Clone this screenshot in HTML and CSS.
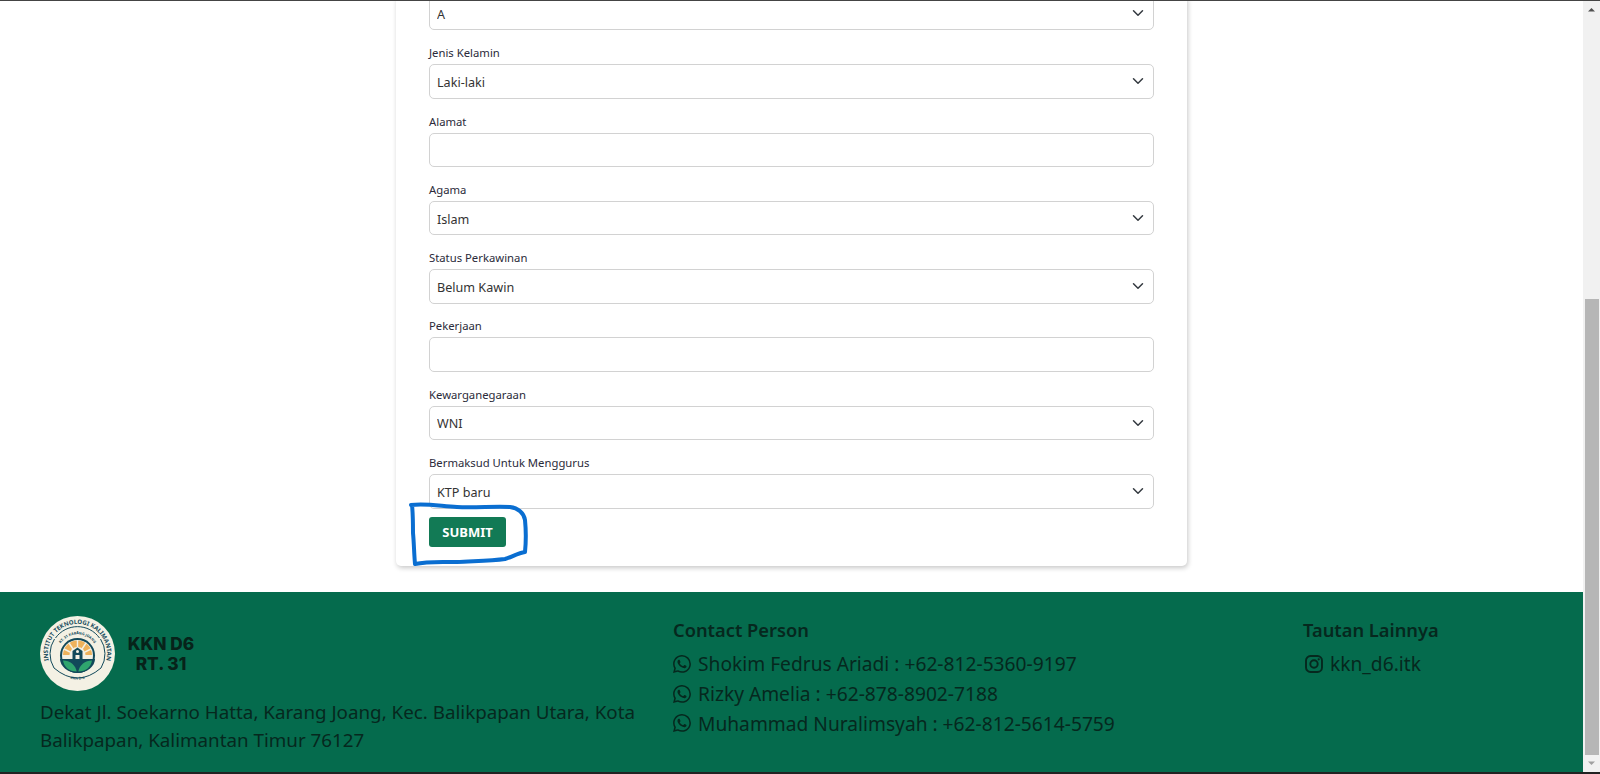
FILE: index.html
```html
<!doctype html>
<html>
<head>
<meta charset="UTF-8">
<title>KKN D6 RT. 31</title>
<link rel="stylesheet" href="styles.css">
</head>

<body>
<svg class="defs" width="0" height="0">
	<symbol id="chev" viewBox="0 0 16 16"><path d="M2 5l6 6 6-6" fill="none" stroke="#343a40" stroke-width="2" stroke-linecap="round" stroke-linejoin="round"/></symbol>
	<symbol id="wa" viewBox="0 0 16 16"><path fill="currentColor" d="M13.601 2.326A7.854 7.854 0 0 0 7.994 0C3.627 0 .068 3.558.064 7.926c0 1.399.366 2.76 1.057 3.965L0 16l4.204-1.102a7.933 7.933 0 0 0 3.79.965h.004c4.368 0 7.926-3.558 7.93-7.93A7.898 7.898 0 0 0 13.6 2.326zM7.994 14.521a6.573 6.573 0 0 1-3.356-.92l-.24-.144-2.494.654.666-2.433-.156-.251a6.56 6.56 0 0 1-1.007-3.505c0-3.626 2.957-6.584 6.591-6.584a6.56 6.56 0 0 1 4.66 1.931 6.557 6.557 0 0 1 1.928 4.66c-.004 3.639-2.961 6.592-6.592 6.592zm3.615-4.934c-.197-.099-1.17-.578-1.353-.646-.182-.065-.315-.099-.445.099-.133.197-.513.646-.627.775-.114.133-.232.148-.43.05-.197-.1-.836-.308-1.592-.985-.59-.525-.985-1.175-1.103-1.372-.114-.198-.011-.304.088-.403.087-.088.197-.232.296-.346.1-.114.133-.198.198-.33.065-.134.034-.248-.015-.347-.05-.099-.445-1.076-.612-1.47-.16-.389-.323-.335-.445-.34-.114-.007-.247-.007-.38-.007a.729.729 0 0 0-.529.247c-.182.198-.691.677-.691 1.654 0 .977.71 1.916.81 2.049.098.133 1.394 2.132 3.383 2.992.47.205.84.326 1.129.418.475.152.904.129 1.246.08.38-.058 1.171-.48 1.338-.943.164-.464.164-.86.114-.943-.049-.084-.182-.133-.38-.232z"/></symbol>
</svg>

<div class="window">
	<div class="page">
		<main class="content">
			<form class="card">
				<div class="field">
					<div class="select"><select><option>A</option></select><svg class="chev"><use href="#chev"/></svg></div>
				</div>
				<div class="field">
					<label>Jenis Kelamin</label>
					<div class="select"><select><option>Laki-laki</option></select><svg class="chev"><use href="#chev"/></svg></div>
				</div>
				<div class="field">
					<label>Alamat</label>
					<input type="text">
				</div>
				<div class="field">
					<label>Agama</label>
					<div class="select"><select><option>Islam</option></select><svg class="chev"><use href="#chev"/></svg></div>
				</div>
				<div class="field">
					<label>Status Perkawinan</label>
					<div class="select"><select><option>Belum Kawin</option></select><svg class="chev"><use href="#chev"/></svg></div>
				</div>
				<div class="field">
					<label>Pekerjaan</label>
					<input type="text">
				</div>
				<div class="field">
					<label>Kewarganegaraan</label>
					<div class="select"><select><option>WNI</option></select><svg class="chev"><use href="#chev"/></svg></div>
				</div>
				<div class="field last">
					<label>Bermaksud Untuk Menggurus</label>
					<div class="select"><select><option>KTP baru</option></select><svg class="chev"><use href="#chev"/></svg></div>
				</div>
				<button class="submit" type="button">SUBMIT</button>
			</form>
		</main>

		<footer class="footer">
			<div class="col-about">
				<div class="brand">
					<svg class="logo" viewBox="0 0 75 75">
						<defs>
							<path id="arc-out" d="M12 52.500A29.600 29.600 0 1 1 63 52.500"/>
							<path id="arc-in" d="M18 34A20 20 0 0 1 57 34"/>
							<path id="arc-low" d="M28 62Q37.500 65 47 62"/>
						</defs>
						<circle cx="37.500" cy="37.500" r="37.500" fill="#f4f1e4"/>
						<path d="M14 52A27 27 0 0 1 14.500 23M61 52A27 27 0 0 0 60.500 23M14 52Q37.500 72 61 52" fill="none" stroke="#12495a" stroke-width="1"/>
						<path d="M15.500 22A27 27 0 0 1 59.500 22" fill="none" stroke="#12495a" stroke-width="1"/>
						<text class="logo-text"><textPath href="#arc-out" startOffset="50%" text-anchor="middle">INSTITUT TEKNOLOGI KALIMANTAN</textPath></text>
						<text class="logo-small"><textPath href="#arc-in" startOffset="50%" text-anchor="middle">RT. 31 KARANG JOANG</textPath></text>
						<circle cx="37.500" cy="39.500" r="17.500" fill="#12495a"/>
						<circle cx="37.500" cy="39.500" r="15.500" fill="#f4f1e4"/>
						<path d="M23 39A14.500 14.500 0 0 1 52 39L45.500 39A8 8 0 0 0 29.500 39Z" fill="#eeb25c"/>
						<path d="M29 27L33 33M37.500 24V31M46 27L42 33M24 33L30 36M51 33L45 36" stroke="#f4f1e4" stroke-width="1.400"/>
						<path d="M32.500 44V35L37.500 31.500L42.500 35V44Z" fill="#12495a"/>
						<circle cx="37.500" cy="35.500" r="1.500" fill="#f4f1e4"/>
						<path d="M35.500 44H39.500V39H35.500Z" fill="#f4f1e4"/>
						<path d="M20 43H55C55 50 47 57 37.500 57S20 50 20 43Z" fill="#12495a"/>
						<path d="M36.700 55.500C35.500 49 30 44.500 23 44.500C24 51 29 55.500 36.700 55.500Z" fill="#2fa56e"/>
						<path d="M38.300 55.500C39.500 49 45 44.500 52 44.500C51 51 46 55.500 38.300 55.500Z" fill="#2fa56e"/>
						<text class="logo-small"><textPath href="#arc-low" startOffset="50%" text-anchor="middle">KKN D-6</textPath></text>
					</svg>
					<div class="brand-name">KKN D6<br>RT. 31</div>
				</div>
				<p class="address">Dekat Jl. Soekarno Hatta, Karang Joang, Kec. Balikpapan Utara, Kota Balikpapan, Kalimantan Timur 76127</p>
			</div>
			<div class="col-contact">
				<h5>Contact Person</h5>
				<div class="row"><svg class="ico"><use href="#wa"/></svg>Shokim Fedrus Ariadi : +62-812-5360-9197</div>
				<div class="row"><svg class="ico"><use href="#wa"/></svg>Rizky Amelia : +62-878-8902-7188</div>
				<div class="row"><svg class="ico"><use href="#wa"/></svg>Muhammad Nuralimsyah : +62-812-5614-5759</div>
			</div>
			<div class="col-links">
				<h5>Tautan Lainnya</h5>
				<div class="row">
					<svg class="ico insta" viewBox="0 0 16 16"><rect x="0.900" y="0.900" width="14.200" height="14.200" rx="4" fill="none" stroke="currentColor" stroke-width="1.700"/><circle cx="8" cy="8" r="3.300" fill="none" stroke="currentColor" stroke-width="1.700"/><circle cx="12.200" cy="3.800" r="1" fill="currentColor"/></svg>kkn_d6.itk
				</div>
			</div>
		</footer>
	</div>

	<div class="scrollbar">
		<svg class="arrow" viewBox="0 0 17 17"><path d="M5 10.500L8.500 7L12 10.500Z" fill="#505050"/></svg>
		<div class="track"><div class="thumb"></div></div>
		<svg class="arrow" viewBox="0 0 17 17"><path d="M5 6.500L8.500 10L12 6.500Z" fill="#a0a0a0"/></svg>
	</div>
</div>

<!-- hand drawn marker round the button -->
<svg class="marker" viewBox="0 0 1600 774">
	<path d="M411 505C425 503 440 506 457 507C475 508 495 506 510 507C518 508 524 513 525 520C526 530 526 542 525 552C518 553 512 557 505 559C490 561 472 561 457 562C442 562 428 561 415 564C414 553 414 543 413 533C413 523 413 514 412 505" fill="none" stroke="#0a6ed1" stroke-width="4" stroke-linecap="round" stroke-linejoin="round"/>
</svg>
</body>
</html>
```

FILE: styles.css
```css
*{ margin:0; padding:0; box-sizing:border-box; }
body{ width:1600px; height:774px; position:relative; display:flex; flex-direction:column; overflow:hidden; background:#fff; border-top:1px solid #444; border-bottom:2px solid #222; font-family:"Noto Sans","Open Sans",sans-serif; color:#212529; }
.defs{ position:absolute; }
.window{ flex:1; min-height:0; display:flex; }
.page{ flex:1; min-width:0; display:flex; flex-direction:column; justify-content:flex-end; overflow:hidden; }

.content{ flex:none; display:flex; justify-content:center; padding-bottom:26px; }
.card{ width:791px; padding:0 33px 19px; background:#fff; border-radius:5px; box-shadow:1px 2px 5px rgba(0,0,0,.22); }
.field{ margin-bottom:12.8px; }
.field.last{ margin-bottom:8px; }
.field label{ display:block; height:19px; margin-bottom:2px; font-size:11.300px; line-height:19px; color:#2b2b3a; }
.select{ position:relative; }
.field select,.field input{ display:block; width:100%; height:34.500px; padding:2px 36px 0 7px; appearance:none; background:#fff; border:1px solid #d2d2d2; border-radius:5px; font-family:inherit; font-size:12.600px; color:#333; outline:none; }
.chev{ position:absolute; top:11px; right:8px; width:16px; height:12px; }
.submit{ display:block; width:77px; height:30.500px; background:#127a55; border:0; border-radius:3px; color:#fff; font-family:inherit; font-size:13px; font-weight:700; }

.footer{ flex:none; height:180px; display:flex; padding:24px 0 0 40px; background:#056b4d; color:#06281e; }
.col-about{ width:633px; padding-right:30px; }
.col-contact{ width:630px; }
.brand{ display:flex; align-items:center; gap:10px; }
.logo{ width:75px; height:75px; }
.logo-text{ font-family:"Noto Sans",sans-serif; font-size:6px; font-weight:700; fill:#12495a; }
.logo-small{ font-family:"Noto Sans",sans-serif; font-size:3.600px; font-weight:700; fill:#12495a; }
.brand-name{ width:72px; font-family:Inter,sans-serif; font-size:17.300px; font-weight:800; line-height:20px; text-align:center; color:#07231a; }
.address{ margin-top:8px; font-size:18.800px; line-height:27.500px; }
h5{ height:26px; margin:1px 0 6px; font-size:18.300px; font-weight:600; line-height:26px; }
.row{ display:flex; align-items:center; gap:7px; height:29.700px; font-size:19.200px; }
.ico{ flex:none; width:18px; height:18px; }
.insta{ margin-left:2px; }

.scrollbar{ flex:none; width:17px; display:flex; flex-direction:column; background:#f1f1f1; }
.arrow{ flex:none; width:17px; height:17px; }
.track{ flex:1; display:flex; flex-direction:column; justify-content:flex-end; padding:0 1px 0 2px; }
.thumb{ height:456px; background:#b6b6b6; }

.marker{ position:absolute; top:-1px; left:0; width:1600px; height:774px; pointer-events:none; }
```
